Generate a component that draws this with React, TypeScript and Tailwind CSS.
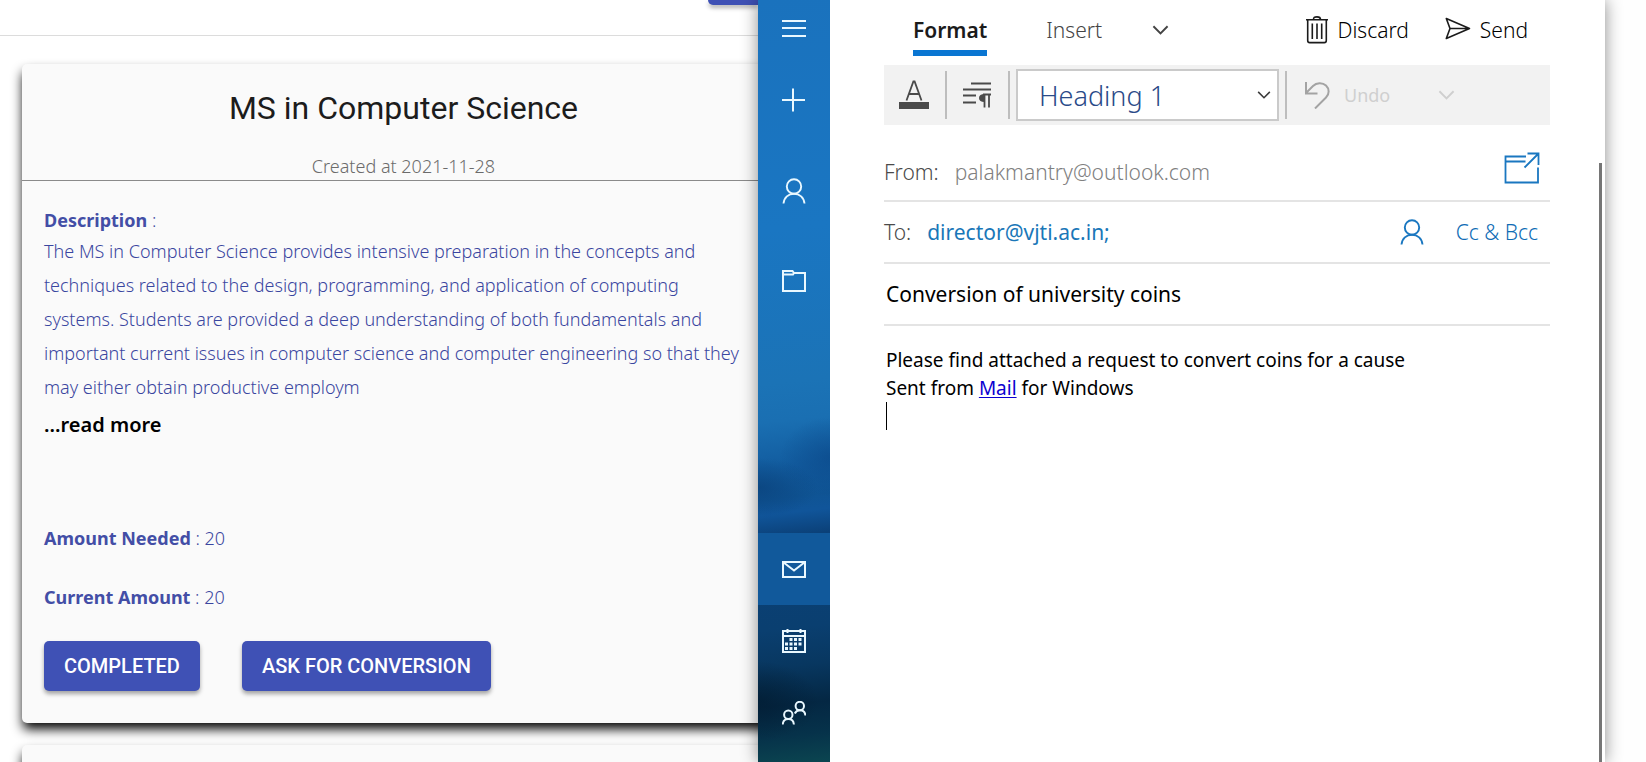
import type { ReactNode } from "react";

function Chevron({ className }: { className: string }) {
  return (
    <svg viewBox="0 0 18 10" fill="none" stroke="currentColor" strokeWidth="2" className={className} aria-hidden="true">
      <path d="M1.5 1 L9 8.5 L16.5 1" />
    </svg>
  );
}

function Person({ className }: { className: string }) {
  return (
    <svg viewBox="0 0 24 26" fill="none" stroke="currentColor" strokeWidth="1.9" className={className} aria-hidden="true">
      <circle cx="12" cy="8.500" r="7.200" />
      <path d="M1.500 25.500C2 19.500 6.500 15.700 12 15.700S22 19.500 22.500 25.500" />
    </svg>
  );
}

function RailButton({ label, className, children }: { label: string; className: string; children: ReactNode }) {
  return (
    <button type="button" aria-label={label} className={`flex w-full shrink-0 items-center justify-center ${className}`}>
      {children}
    </button>
  );
}

const cardShadow = "shadow-[0_7px_12px_-1px_#000]";
const cardButton =
  "h-[50px] rounded-[5px] bg-[#3f51b5] px-5 font-['Roboto',sans-serif] text-xl font-medium text-white shadow-[0_3px_4px_rgba(0,0,0,0.35)]";

function Campaigns() {
  return (
    <section className="min-w-0 shrink-0 basis-[46.05%] overflow-hidden bg-white">
      <header className="flex h-9 items-start justify-end border-b border-[#dcdcdc]">
        <button
          type="button"
          aria-label="Create campaign"
          className="h-[5px] w-[50px] rounded-bl-[5px] bg-[#3f51b5] shadow-[0_3px_4px_rgba(0,0,0,0.3)]"
        />
      </header>
      <div className="-mr-[27px] flex flex-col gap-[22px] pt-7 pl-[22px]">
        <article className={`rounded-[5px] bg-[#fafafa] ${cardShadow}`}>
          <div className="border-b border-[#8a8a8a] pt-6 text-center">
            <h1 className="font-['Roboto',sans-serif] text-[32px] leading-10 text-[#1c1c1c]">MS in Computer Science</h1>
            <p className="mt-6 text-lg leading-7 font-light text-[#6b6b6b]">Created at 2021-11-28</p>
          </div>
          <div className="px-[22px] pt-[25px] pb-8 text-lg leading-7 font-light text-[#3a46a0]">
            <p>
              <strong className="font-bold text-[#434ea6]">Description</strong> :
            </p>
            <p className="pr-5 leading-[34px]">
              The MS in Computer Science provides intensive preparation in the concepts and techniques related to the
              design, programming, and application of computing systems. Students are provided a deep understanding of
              both fundamentals and important current issues in computer science and computer engineering so that they
              may either obtain productive employm
            </p>
            <button type="button" className="mt-1.5 block text-xl leading-[30px] font-semibold text-black">
              ...read more
            </button>
            <p className="mt-[84px]">
              <strong className="font-bold text-[#434ea6]">Amount Needed</strong> : 20
            </p>
            <p className="mt-[31px]">
              <strong className="font-bold text-[#434ea6]">Current Amount</strong> : 20
            </p>
            <div className="mt-[30px] flex gap-[42px]">
              <button type="button" className={cardButton}>
                COMPLETED
              </button>
              <button type="button" className={cardButton}>
                ASK FOR CONVERSION
              </button>
            </div>
          </div>
        </article>
        <article className={`h-40 rounded-[5px] bg-[#fafafa] ${cardShadow}`} />
      </div>
    </section>
  );
}

function Rail() {
  return (
    <nav
      aria-label="Mail navigation"
      className="flex w-[72px] shrink-0 flex-col overflow-hidden bg-[radial-gradient(ellipse_60px_30px_at_0%_64%,rgba(8,60,115,0.6),transparent),radial-gradient(ellipse_50px_40px_at_100%_60%,rgba(10,70,135,0.6),transparent),radial-gradient(ellipse_60px_40px_at_0%_92%,rgba(2,28,50,0.7),transparent),linear-gradient(174deg,#1a72bd_0%,#1a76c2_30%,#1b73b6_50%,#1a6fb2_55%,#125c9f_61%,#0f5494_65%,#10559a_67%,#0b4179_70%,#0a3f70_82%,#083760_87%,#042743_92%,#06324a_96%,#0b4550_100%)] text-[#e9f8ff]"
    >
      <RailButton label="Menu" className="h-14">
        <svg viewBox="0 0 24 18" className="h-[18px] w-6" stroke="currentColor" strokeWidth="2">
          <path d="M0 2h24M0 9h24M0 17h24" />
        </svg>
      </RailButton>
      <RailButton label="New mail" className="h-[88px]">
        <svg viewBox="0 0 24 24" className="size-6" stroke="currentColor" strokeWidth="2">
          <path d="M0 12h23M11 0.500v23" />
        </svg>
      </RailButton>
      <RailButton label="Accounts" className="h-[94px]">
        <Person className="h-[26px] w-6" />
      </RailButton>
      <RailButton label="Folders" className="h-[86px]">
        <svg viewBox="0 0 24 22" className="h-[22px] w-6" fill="none" stroke="currentColor" strokeWidth="2">
          <path d="M1 21V1h9.500l1.500 2h11v18zM1 4.500h10l1-1.500" />
        </svg>
      </RailButton>
      <div className="mt-auto flex flex-col pb-[13px]">
        <RailButton label="Mail" className="h-[72px] bg-[#11599b]">
          <svg viewBox="0 0 24 17" className="h-[17px] w-6" fill="none" stroke="currentColor" strokeWidth="2">
            <path d="M1 1h22v15H1zM1 1l11 8.500L23 1" />
          </svg>
        </RailButton>
        <RailButton label="Calendar" className="h-[72px]">
          <svg viewBox="0 0 24 24" className="size-6" fill="none" stroke="currentColor" strokeWidth="2">
            <path d="M1 2h22v21H1zM1 7h22M5.500 0v4M18.500 0v4" />
            <path
              d="M7.500 10.500h3M12 10.500h3M16.500 10.500h3M3 15h3M7.500 15h3M12 15h3M16.500 15h3M3 19.500h3M7.500 19.500h3M12 19.500h3"
              strokeWidth="3"
            />
          </svg>
        </RailButton>
        <RailButton label="People" className="h-[72px]">
          <svg viewBox="0 0 24 24" className="size-6" fill="none" stroke="currentColor" strokeWidth="2">
            <circle cx="17.800" cy="5" r="4.200" />
            <path d="M12.800 12.500C13.800 10.300 15.600 9.300 17.800 9.300c3.200 0 5.400 2 5.600 5.200" />
            <circle cx="6.300" cy="13.800" r="4.200" />
            <path d="M0.700 23.500C1 20.200 3.200 18.100 6.300 18.100s5.300 2.100 5.600 5.400" />
          </svg>
        </RailButton>
      </div>
    </nav>
  );
}

function Separator() {
  return <span className="h-12 w-0.5 shrink-0 bg-[#bdbdbd]" />;
}

function Compose() {
  return (
    <div className="relative min-w-0 flex-1 bg-white pr-[55px] pl-[54px]">
      <div className="mb-[9px] flex items-start pt-4 pr-[22px] pl-[29px] text-[21px] leading-7 font-light">
        <button type="button" className="border-b-[6px] border-[#0a76d2] pb-1.5 font-semibold text-[#1b1b1b]">
          Format
        </button>
        <button type="button" className="ml-[59px] text-[#444]">
          Insert
        </button>
        <button type="button" aria-label="More tabs" className="ml-[50px] flex h-7 items-center text-[#444]">
          <Chevron className="h-[10px] w-[17px]" />
        </button>
        <button type="button" className="ml-auto flex items-start gap-[9px] text-black">
          <svg viewBox="0 0 22 28" className="h-7 w-[22px]" fill="none" stroke="#1b1b1b" strokeWidth="1.6" aria-hidden="true">
            <path d="M0 3.700h22M7.500 3.500C7.500 1.500 8.500 0.900 11 0.900s3.500 0.600 3.500 2.600" />
            <path d="M1.700 4v20.500c0 1.400 0.700 2.100 2 2.100h14.600c1.300 0 2-0.700 2-2.100V4M6.300 7.500v15.500M11 7.500v15.500M15.700 7.500v15.500" />
          </svg>
          Discard
        </button>
        <button type="button" className="ml-9 flex items-start gap-[9px] text-black">
          <svg viewBox="0 0 26 28" className="h-7 w-[26px]" fill="none" stroke="#1b1b1b" strokeWidth="1.6" aria-hidden="true">
            <path d="M1.300 2.500 L24.500 12.500 L1.300 22.500 L5 12.500 Z M5 12.500H24.500" strokeLinejoin="round" />
          </svg>
          Send
        </button>
      </div>

      <div className="flex h-[60px] items-center bg-[#f2f2f2]">
        <button type="button" aria-label="Font formatting" className="flex h-full w-[61px] items-center justify-center">
          <svg viewBox="0 0 30 30" className="size-[30px]" fill="none" stroke="#4a4a4a" strokeWidth="1.8">
            <path d="M7.500 20.500 L14.400 1.500 h1.200 L22.500 20.500 M10 14h10" />
            <path d="M0 22h30v7H0z" fill="#4a4a4a" stroke="none" />
          </svg>
        </button>
        <Separator />
        <button type="button" aria-label="Paragraph formatting" className="flex h-full w-[61px] items-center justify-center">
          <svg viewBox="0 0 28 26" className="h-[26px] w-7" fill="none" stroke="#4a4a4a" strokeWidth="1.800">
            <path d="M8 1.500h20M0 7.500h28M0 13.500h13M0 20.500h13" />
            <path d="M20 12.500h8M21.500 12.500v13M26 12.500v13" />
            <path d="M21.500 12c-3.500 0-5.500 1.500-5.500 4s2 4 5.500 4z" fill="#4a4a4a" stroke="none" />
          </svg>
        </button>
        <Separator />
        <div className="relative mx-1.5 w-[263px] text-[#2a4a88]">
          <select
            aria-label="Paragraph style"
            className="h-[52px] w-full appearance-none border-2 border-[#cacaca] bg-white pt-0.5 pl-[21px] text-[27px] font-light outline-none"
          >
            <option>Heading 1</option>
          </select>
          <span className="pointer-events-none absolute inset-y-0 right-[8px] flex items-center text-[#3a3a3a]">
            <Chevron className="h-2 w-[14px]" />
          </span>
        </div>
        <Separator />
        <button type="button" disabled className="ml-[17px] flex items-center gap-[14px] text-lg text-[#cfcfcf]">
          <svg viewBox="0 0 26 28" className="h-7 w-[26px]" fill="none" stroke="#a3a3a3" strokeWidth="2" aria-hidden="true">
            <path d="M2 1v11.500h11.500M2 12 L9 5 C12.500 1.500 18.500 1.200 22 4.500 s3.500 8.500 0 12 L11 27.500" />
          </svg>
          Undo
        </button>
        <button type="button" disabled aria-label="Undo history" className="ml-12 text-[#cfcfcf]">
          <Chevron className="h-[10px] w-[17px]" />
        </button>
      </div>

      <div className="flex h-[77px] items-center gap-4 border-b-2 border-[#e4e4e4] pt-[18px] text-[21px] leading-7 font-light">
        <span className="text-[#4a4a4a]">From:</span>
        <span className="min-w-0 flex-1 text-[#808080]">palakmantry@outlook.com</span>
        <button type="button" aria-label="Open in new window" className="mr-[10px] mb-2">
          <svg viewBox="0 0 36 32" className="h-8 w-9" fill="none" stroke="#1a77c0" strokeWidth="1.8">
            <path d="M22 4.500H1.500v26h32.500V15.500M1.500 9.500h20" />
            <path d="M23.500 1.500h11v11.500M34.500 1.500L20.500 15.500" />
          </svg>
        </button>
      </div>
      <div className="flex h-[62px] items-center gap-4 border-b-2 border-[#e4e4e4] text-[21px] leading-7">
        <label htmlFor="to" className="font-light text-[#4a4a4a]">
          To:
        </label>
        <input id="to" type="text" defaultValue="director@vjti.ac.in;" className="min-w-0 flex-1 text-[#1a77b8] outline-none" />
        <button type="button" aria-label="Choose contacts" className="text-[#1a77c0]">
          <Person className="h-[26px] w-6" />
        </button>
        <button type="button" className="mr-3 ml-4 font-light text-[#0f6cb5]">
          Cc &amp; Bcc
        </button>
      </div>
      <div className="flex h-[62px] items-center border-b-2 border-[#e4e4e4] text-[21px] leading-7">
        <input
          type="text"
          aria-label="Subject"
          defaultValue="Conversion of university coins"
          className="w-full pl-0.5 text-black outline-none"
        />
      </div>
      <div role="textbox" aria-label="Message" className="pt-5 pl-0.5 text-[19px] leading-7 text-black">
        <p>Please find attached a request to convert coins for a cause</p>
        <p>
          Sent from{" "}
          <a href="#mail" className="text-[#0b00d0] underline underline-offset-2">
            Mail
          </a>{" "}
          for Windows
        </p>
        <span className="block h-7 w-px bg-black" />
      </div>

      <span className="absolute top-[163px] right-[3px] bottom-0 w-[3px] bg-[#767676]" />
    </div>
  );
}

export default function App() {
  return (
    <main className="flex h-screen overflow-hidden bg-[#fefefe] font-['Noto_Sans','Open_Sans',sans-serif]">
      <Campaigns />
      <div className="relative mr-[41px] flex min-w-0 flex-1 shadow-[0_0_16px_rgba(0,0,0,0.45)]">
        <Rail />
        <Compose />
      </div>
    </main>
  );
}
